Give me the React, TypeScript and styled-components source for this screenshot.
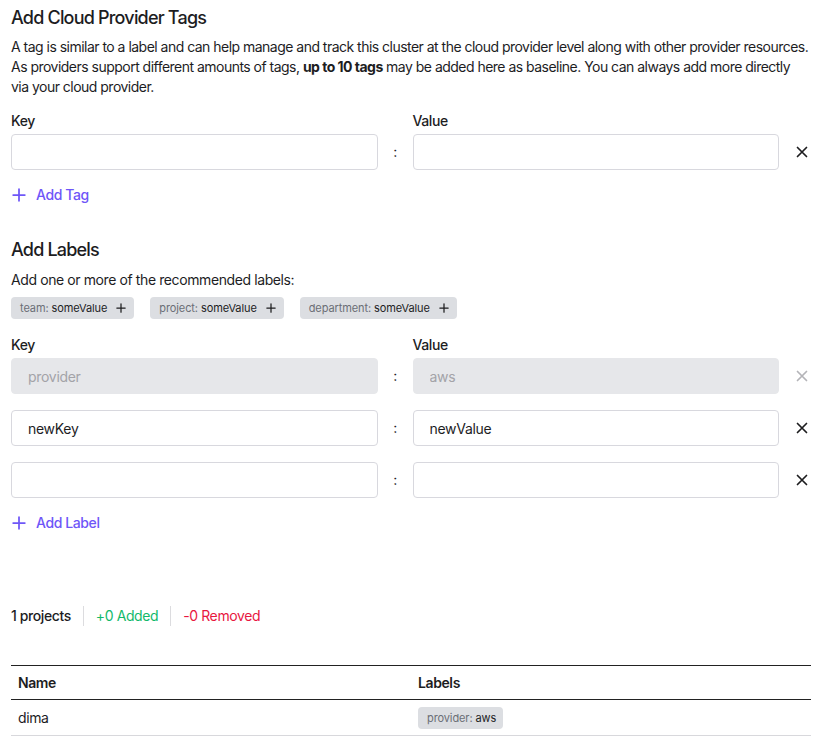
import React from 'react';
import styled, { createGlobalStyle } from 'styled-components';

const GlobalStyle = createGlobalStyle`
  body {
    margin: 0;
    font-family: Inter, "Noto Sans", sans-serif;
    color: #1d1d1f;
    background: #fff;
  }
`;

const Page = styled.div`
  padding: 6px 19px 0 11px;
  font-size: 14px;
  line-height: 20px;
  letter-spacing: -0.4px;
`;

const Title = styled.h2<{ $gap?: number }>`
  margin: ${p => p.$gap || 0}px 0 0;
  font-size: 18px;
  line-height: 24px;
  font-weight: 500;
  letter-spacing: -0.8px;
`;

const Text = styled.p<{ $gap: number }>`
  margin: ${p => p.$gap}px 0 0;
`;

const Intro = styled.p`
  margin: 7px 0 0;
  white-space: nowrap;
  letter-spacing: -0.52px;
`;

const HeaderRow = styled.div<{ $gap: number }>`
  display: grid;
  grid-template-columns: 1fr 35px 1fr 32px;
  margin-top: ${p => p.$gap}px;
  margin-bottom: 3px;
  font-weight: 500;
`;

const Rows = styled.div`
  display: flex;
  flex-direction: column;
  gap: 16px;
`;

const Row = styled.div`
  display: grid;
  grid-template-columns: 1fr 35px 1fr 32px;
  align-items: center;
  height: 36px;
`;

const Input = styled.input`
  box-sizing: border-box;
  height: 36px;
  width: 100%;
  border: 1px solid #d8d8de;
  border-radius: 4px;
  padding: 0 16px;
  font: inherit;
  letter-spacing: -0.3px;
  color: #1d1d1f;
  background: #fff;
  &:disabled {
    background: #e6e7ea;
    border-color: #e6e7ea;
    color: #a3a3a8;
  }
`;

const Colon = styled.span`
  text-align: center;
  font-size: 14px;
`;

const RemoveButton = styled.button<{ $disabled?: boolean }>`
  border: none;
  background: none;
  padding: 0;
  display: flex;
  justify-content: flex-end;
  padding-right: 3px;
  color: ${p => (p.$disabled ? '#b4b4b8' : '#1d1d1f')};
`;

const AddButton = styled.button`
  display: flex;
  align-items: center;
  gap: 10px;
  margin-top: 15px;
  border: none;
  background: none;
  padding: 0 0 0 1px;
  font: inherit;
  letter-spacing: -0.4px;
  font-weight: 500;
  color: #6e56f8;
`;

const Chips = styled.div`
  display: flex;
  gap: 16px;
  margin-top: 7px;
`;

const Chip = styled.span<{ $action?: boolean }>`
  display: inline-flex;
  align-items: center;
  gap: 9px;
  height: 22px;
  padding: 0 ${p => (p.$action ? 8 : 7)}px 0 9px;
  border-radius: 4px;
  background: #dcdee2;
  font-size: 11px;
  line-height: 22px;
  letter-spacing: -0.1px;
  color: #1d1d1f;
`;

const ChipKey = styled.span`
  color: #6b6e76;
`;

const Stats = styled.div`
  display: flex;
  align-items: center;
  margin-top: 73px;
`;

const Stat = styled.span<{ $color?: string; $first?: boolean }>`
  color: ${p => p.$color || '#1d1d1f'};
  padding: 0 12px;
  padding-left: ${p => (p.$first ? 0 : 12)}px;
  border-left: ${p => (p.$first ? 'none' : '1px solid #dcdcdf')};
  font-weight: ${p => (p.$first ? 500 : 400)};
`;

const Table = styled.table`
  width: 100%;
  margin-top: 39px;
  border-collapse: collapse;
  table-layout: fixed;
`;

const Th = styled.th`
  text-align: left;
  font-weight: 600;
  padding: 7px 7px 6px;
  border-top: 1.5px solid #222;
  border-bottom: 1.5px solid #222;
`;

const Td = styled.td`
  padding: 6px 7px;
  height: 23px;
  border-bottom: 1px solid #d8d8dc;
`;

const XIcon = () => (
  <svg width="12" height="12" viewBox="0 0 12 12" fill="none" stroke="currentColor" strokeWidth="1.7" strokeLinecap="round">
    <path d="M1.5 1.5l9 9M10.5 1.5l-9 9" />
  </svg>
);

const PlusIcon = ({ size }: { size: number }) => (
  <svg width={size} height={size} viewBox="0 0 12 12" fill="none" stroke="currentColor" strokeWidth="1.5" strokeLinecap="round">
    <path d="M6 1v10M1 6h10" />
  </svg>
);

const KeyValueRow = ({ k, v, disabled }: { k?: string; v?: string; disabled?: boolean }) => (
  <Row>
    <Input defaultValue={k} disabled={disabled} />
    <Colon>:</Colon>
    <Input defaultValue={v} disabled={disabled} />
    <RemoveButton $disabled={disabled}><XIcon /></RemoveButton>
  </Row>
);

const recommended = [
  { key: 'team', value: 'someValue' },
  { key: 'project', value: 'someValue' },
  { key: 'department', value: 'someValue' },
];

export default function App() {
  return (
    <Page>
      <GlobalStyle />
      <Title>Add Cloud Provider Tags</Title>
      <Intro>
        A tag is similar to a label and can help manage and track this cluster at the cloud provider level along with other provider resources.
        <br />
        As providers support different amounts of tags, <b>up to 10 tags</b> may be added here as baseline. You can always add more directly
        <br />
        via your cloud provider.
      </Intro>
      <HeaderRow $gap={14}>
        <span>Key</span>
        <span />
        <span>Value</span>
      </HeaderRow>
      <Rows>
        <KeyValueRow />
      </Rows>
      <AddButton><PlusIcon size={14} />Add Tag</AddButton>

      <Title $gap={33}>Add Labels</Title>
      <Text $gap={8}>Add one or more of the recommended labels:</Text>
      <Chips>
        {recommended.map(r => (
          <Chip key={r.key} $action>
            <span><ChipKey>{r.key}:</ChipKey> {r.value}</span>
            <PlusIcon size={10} />
          </Chip>
        ))}
      </Chips>
      <HeaderRow $gap={16}>
        <span>Key</span>
        <span />
        <span>Value</span>
      </HeaderRow>
      <Rows>
        <KeyValueRow k="provider" v="aws" disabled />
        <KeyValueRow k="newKey" v="newValue" />
        <KeyValueRow />
      </Rows>
      <AddButton><PlusIcon size={14} />Add Label</AddButton>

      <Stats>
        <Stat $first>1 projects</Stat>
        <Stat $color="#12b96a">+0 Added</Stat>
        <Stat $color="#e8173f">-0 Removed</Stat>
      </Stats>

      <Table>
        <thead>
          <tr>
            <Th>Name</Th>
            <Th>Labels</Th>
          </tr>
        </thead>
        <tbody>
          <tr>
            <Td>dima</Td>
            <Td><Chip><span><ChipKey>provider:</ChipKey> aws</span></Chip></Td>
          </tr>
        </tbody>
      </Table>
    </Page>
  );
}
